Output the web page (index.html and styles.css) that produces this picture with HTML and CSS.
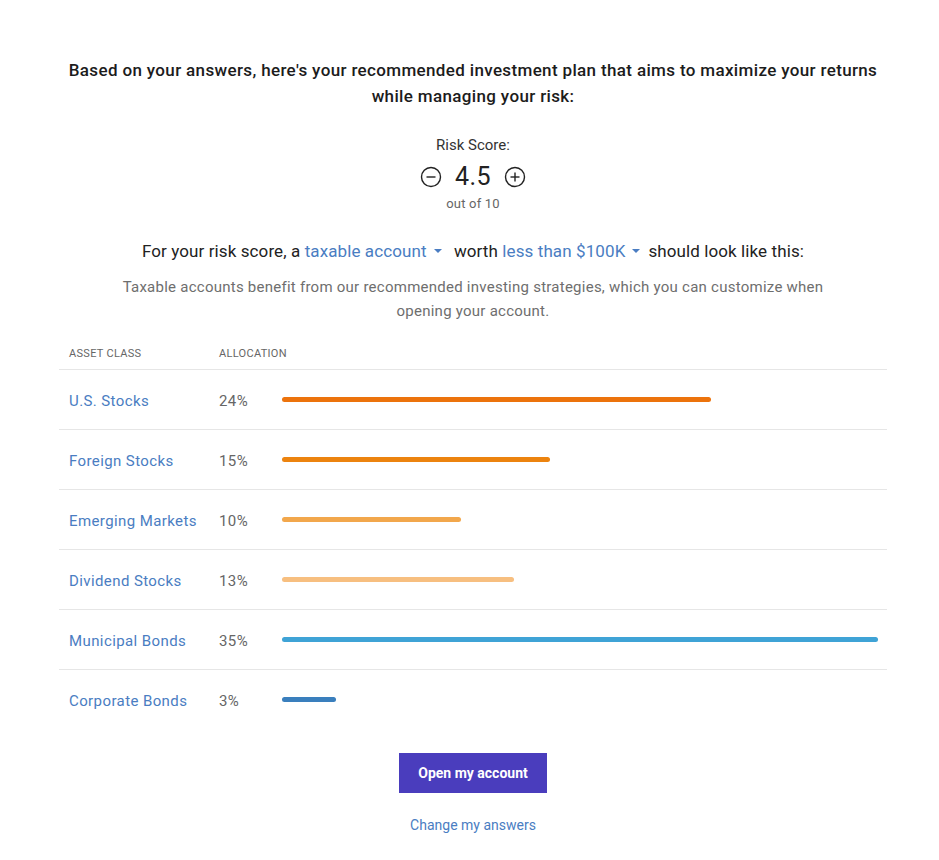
FILE: index.html
```html
<!DOCTYPE html>
<html>
<head>
<meta charset="utf-8">
<link rel="stylesheet" href="styles.css">
</head>
<body>
<div class="page">
  <h1 class="title">Based on your answers, here's your recommended investment plan that aims to maximize your returns while managing your risk:</h1>

  <div class="risk">
    <div class="risk-label">Risk Score:</div>
    <div class="risk-row">
      <svg class="risk-btn" width="22" height="22" viewBox="0 0 22 22"><circle cx="11" cy="11" r="9.5" fill="none" stroke="#222" stroke-width="1.4"/><line x1="6.5" y1="11" x2="15.5" y2="11" stroke="#222" stroke-width="1.4"/></svg>
      <span class="risk-value">4.5</span>
      <svg class="risk-btn" width="22" height="22" viewBox="0 0 22 22"><circle cx="11" cy="11" r="9.5" fill="none" stroke="#222" stroke-width="1.4"/><line x1="6.5" y1="11" x2="15.5" y2="11" stroke="#222" stroke-width="1.4"/><line x1="11" y1="6.5" x2="11" y2="15.5" stroke="#222" stroke-width="1.4"/></svg>
    </div>
    <div class="risk-sub">out of 10</div>
  </div>

  <p class="lead">For your risk score, a <span class="link">taxable account<span class="caret"></span></span> worth <span class="link">less than $100K<span class="caret"></span></span>should look like this:</p>

  <p class="desc">Taxable accounts benefit from our recommended investing strategies, which you can customize when opening your account.</p>

  <div class="table">
    <div class="thead">
      <div class="c-name">ASSET CLASS</div>
      <div class="c-pct">ALLOCATION</div>
    </div>
    <div class="row">
      <div class="c-name link">U.S. Stocks</div>
      <div class="c-pct">24%</div>
      <div class="c-bar"><div class="bar us" style="width:429px"></div></div>
    </div>
    <div class="row">
      <div class="c-name link">Foreign Stocks</div>
      <div class="c-pct">15%</div>
      <div class="c-bar"><div class="bar foreign" style="width:268px"></div></div>
    </div>
    <div class="row">
      <div class="c-name link">Emerging Markets</div>
      <div class="c-pct">10%</div>
      <div class="c-bar"><div class="bar emerging" style="width:179px"></div></div>
    </div>
    <div class="row">
      <div class="c-name link">Dividend Stocks</div>
      <div class="c-pct">13%</div>
      <div class="c-bar"><div class="bar dividend" style="width:232px"></div></div>
    </div>
    <div class="row">
      <div class="c-name link">Municipal Bonds</div>
      <div class="c-pct">35%</div>
      <div class="c-bar"><div class="bar municipal" style="width:596px"></div></div>
    </div>
    <div class="row">
      <div class="c-name link">Corporate Bonds</div>
      <div class="c-pct">3%</div>
      <div class="c-bar"><div class="bar corporate" style="width:54px"></div></div>
    </div>
  </div>

  <div class="actions">
    <button class="btn">Open my account</button>
    <a class="change">Change my answers</a>
  </div>
</div>
</body>
</html>
```
FILE: styles.css
```css
* { box-sizing: border-box; }
html, body { margin: 0; padding: 0; background: #fff; }
body {
  font-family: Roboto, "Liberation Sans", Arial, sans-serif;
  color: #222;
}
.page {
  width: 828px;
  margin-left: 59px;
  padding-top: 57px;
  padding-bottom: 20px;
}
.title {
  margin: 0 auto;
  width: 812px;
  text-align: center;
  font-size: 17px;
  line-height: 26px;
  font-weight: 500;
  letter-spacing: 0.35px;
  color: #1c1c1c;
}
.risk {
  margin-top: 26px;
  display: flex;
  flex-direction: column;
  align-items: center;
}
.risk-label {
  font-size: 15px;
  line-height: 20px;
  color: #333;
}
.risk-row {
  margin-top: 6px;
  height: 32px;
  display: flex;
  align-items: center;
  gap: 13px;
}
.risk-value {
  font-size: 25px;
  line-height: 32px;
  color: #222;
  letter-spacing: 0.5px;
}
.risk-sub {
  margin-top: 2px;
  font-size: 13px;
  line-height: 18px;
  color: #666;
  letter-spacing: 0.2px;
}
.lead {
  margin: 25px 0 0;
  text-align: center;
  font-size: 17px;
  line-height: 26px;
  color: #222;
  letter-spacing: 0.1px;
}
.link { color: #4a7dc2; }
.caret {
  display: inline-block;
  width: 0;
  height: 0;
  margin: 0 8px 3px 7px;
  vertical-align: middle;
  border-left: 4px solid transparent;
  border-right: 4px solid transparent;
  border-top: 4px solid #4a7dc2;
}
.desc {
  margin: 11px auto 0;
  width: 720px;
  text-align: center;
  font-size: 15px;
  line-height: 24px;
  color: #6e6e6e;
  letter-spacing: 0.25px;
}
.table { margin-top: 22px; }
.thead {
  display: flex;
  font-size: 11px;
  line-height: 16px;
  color: #666;
  padding-top: 1px;
  padding-bottom: 7px;
  letter-spacing: 0.3px;
}
.c-name { width: 160px; padding-left: 10px; flex: none; }
.c-pct { width: 63px; flex: none; }
.c-bar { flex: 1; padding-right: 9px; display: flex; align-items: center; }
.row {
  display: flex;
  align-items: center;
  height: 60px;
  border-top: 1px solid #e6e6e6;
  font-size: 15px;
  padding-top: 3px;
  letter-spacing: 0.4px;
}
.row .c-pct { color: #666; }
.row .c-bar { margin-top: -3px; }
.bar {
  height: 5px;
  border-radius: 3px;
}
.us { background: #ec730c; }
.foreign { background: #ec830f; }
.emerging { background: #f2a74c; }
.dividend { background: #f7bf80; }
.municipal { background: #3fa3d6; }
.corporate { background: #3a7fbd; }
.actions {
  margin-top: 24px;
  display: flex;
  flex-direction: column;
  align-items: center;
}
.btn {
  width: 148px;
  height: 40px;
  border: 0;
  background: #4a3dbd;
  color: #fff;
  font-family: inherit;
  font-size: 14px;
  font-weight: 700;
  padding: 0;
}
.change {
  margin-top: 22px;
  font-size: 14px;
  line-height: 20px;
  color: #4a7dc2;
}
```
